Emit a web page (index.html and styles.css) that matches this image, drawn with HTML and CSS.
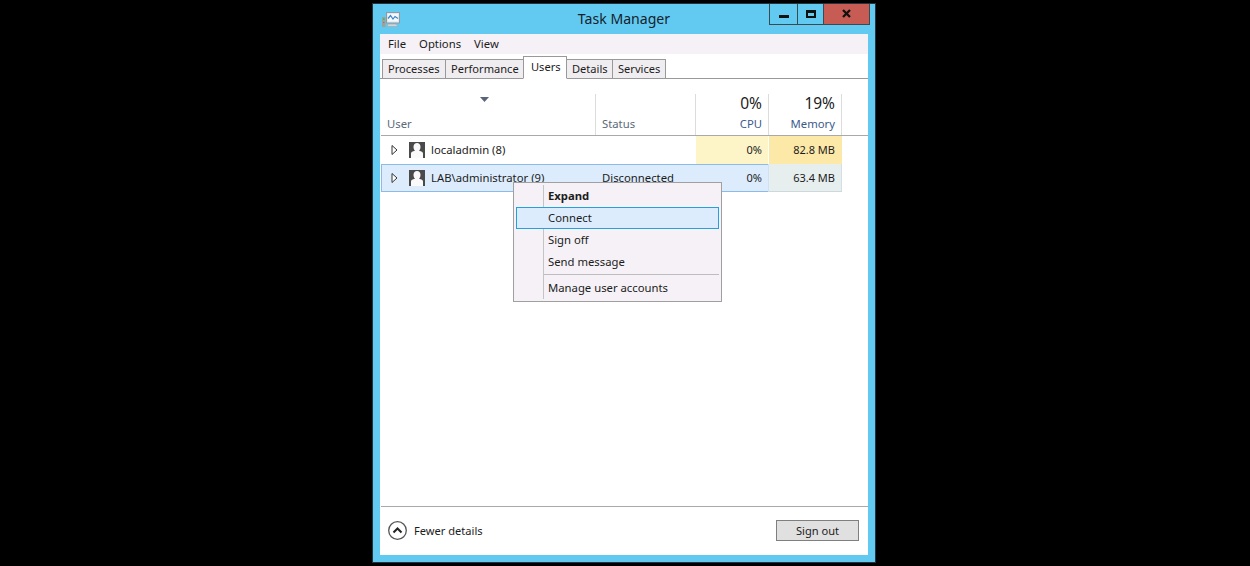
FILE: index.html
```html
<!DOCTYPE html>
<html lang="en">
<head>
<meta charset="utf-8">
<title>Task Manager</title>
<link rel="stylesheet" href="styles.css">
</head>
<body>
<div class="window">
  <div class="titlebar">
    <svg class="app-icon" width="18" height="15" viewBox="0 0 18 15"><path d="M6 12h8l2 2.500H5z" fill="#cfd6da" stroke="#9aa4ab" stroke-width="0.600"/><rect x="4.500" y="0.500" width="13" height="10.500" fill="#dfe8ee" stroke="#8f9ba3"/><rect x="6" y="2" width="10" height="7.500" fill="#f4f8fb"/><path d="M6 6.500l2.500-3 2.500 3.500 2-2.500 3 2" fill="none" stroke="#3a86c8" stroke-width="1.200"/><rect x="0" y="5" width="3.500" height="10" fill="#9aa39c"/><rect x="1" y="6" width="1.500" height="2" fill="#5fb060"/><rect x="1" y="10" width="1.500" height="1" fill="#c8605a"/></svg>
    <div class="title">Task Manager</div>
    <div class="controls">
      <div class="ctl ctl-min"><span class="min-glyph"></span></div>
      <div class="ctl ctl-max"><span class="max-glyph"></span></div>
      <div class="ctl ctl-close"><svg width="9" height="9" viewBox="0 0 9 9"><path d="M1 1l7 7M8 1l-7 7" stroke="#111" stroke-width="2.300" fill="none"/></svg></div>
    </div>
  </div>
  <div class="client">
    <div class="menubar"><span>File</span><span>Options</span><span>View</span></div>
    <div class="tabs">
      <div class="tab tab-processes">Processes</div>
      <div class="tab tab-performance">Performance</div>
      <div class="tab tab-active">Users</div>
      <div class="tab tab-details">Details</div>
      <div class="tab tab-services">Services</div>
    </div>
    <div class="table">
      <div class="thead">
        <div class="th th-user"><svg class="sort" width="9" height="5" viewBox="0 0 9 5"><path d="M0 0h9L4.500 5z" fill="#5a6478"/></svg><span class="th-label">User</span></div>
        <div class="th th-status"><span class="th-label">Status</span></div>
        <div class="th th-num th-cpu"><span class="pct">0%</span><span class="th-label th-blue">CPU</span></div>
        <div class="th th-num th-mem"><span class="pct">19%</span><span class="th-label th-blue">Memory</span></div>
      </div>
      <div class="row">
        <div class="cell c-user"><svg class="twisty" width="7" height="10" viewBox="0 0 7 10"><path d="M1 0.500L6 5 1 9.500z" fill="#fff" stroke="#333"/></svg><svg class="avatar" width="16" height="16" viewBox="0 0 16 16"><rect width="16" height="16" fill="#4a4a4a"/><path d="M2 16v-4.500C2 10 3.500 9.300 6 8.800 5 7.800 4.500 6.500 4.500 4.800 4.500 2.500 6 1 8 1s3.500 1.500 3.500 3.800c0 1.700-.5 3-1.500 4 2.500.5 4 1.200 4 2.700V16z" fill="#fafafa"/></svg><span>localadmin (8)</span></div>
        <div class="cell c-status"></div>
        <div class="cell c-num c-cpu heat-1">0%</div>
        <div class="cell c-num c-mem heat-2">82.8 MB</div>
      </div>
      <div class="row row-selected">
        <div class="cell c-user"><svg class="twisty" width="7" height="10" viewBox="0 0 7 10"><path d="M1 0.500L6 5 1 9.500z" fill="#fff" stroke="#333"/></svg><svg class="avatar" width="16" height="16" viewBox="0 0 16 16"><rect width="16" height="16" fill="#4a4a4a"/><path d="M2 16v-4.500C2 10 3.500 9.300 6 8.800 5 7.800 4.500 6.500 4.500 4.800 4.500 2.500 6 1 8 1s3.500 1.500 3.500 3.800c0 1.700-.5 3-1.500 4 2.500.5 4 1.200 4 2.700V16z" fill="#fafafa"/></svg><span>LAB\administrator (9)</span></div>
        <div class="cell c-status">Disconnected</div>
        <div class="cell c-num c-cpu">0%</div>
        <div class="cell c-num c-mem heat-3">63.4 MB</div>
      </div>
    </div>
    <div class="footer">
      <div class="fewer">
        <svg width="19" height="19" viewBox="0 0 19 19"><circle cx="9.500" cy="9.500" r="8.800" fill="#fff" stroke="#555" stroke-width="1.300"/><path d="M5.500 11.500l4-4 4 4" fill="none" stroke="#222" stroke-width="2"/></svg>
        <span>Fewer details</span>
      </div>
      <div class="signout">Sign out</div>
    </div>
  </div>
  <div class="context-menu">
    <div class="mi mi-bold">Expand</div>
    <div class="mi mi-hot">Connect</div>
    <div class="mi">Sign off</div>
    <div class="mi">Send message</div>
    <div class="mi-sep"></div>
    <div class="mi mi-last">Manage user accounts</div>
  </div>
</div>
</body>
</html>
```

FILE: styles.css
```css
* { box-sizing: border-box; }
html, body { margin: 0; height: 100%; }
body {
  background: #000;
  padding: 3px 0 0 372px;
  font-family: "Noto Sans", "Open Sans", sans-serif;
  font-size: 11.3px;
  color: #1c1c1c;
  overflow: hidden;
}
.window {
  position: relative;
  width: 504px;
  height: 560px;
  background: #62caf1;
  border: 1px solid #24343e;
  padding: 0 7px 7px;
  display: flex;
  flex-direction: column;
}
.titlebar {
  height: 30px;
  flex: none;
  display: flex;
  align-items: flex-start;
  position: relative;
}
.app-icon { margin: 8px 0 0 2px; }
.title {
  position: absolute;
  left: 0;
  right: 0;
  top: 5px;
  text-align: center;
  font-size: 14.1px;
  line-height: 20px;
  color: #14222c;
}
.controls {
  position: absolute;
  right: -2px;
  top: 0;
  display: flex;
  height: 21px;
}
.ctl {
  height: 21px;
  display: flex;
  align-items: center;
  justify-content: center;
  border: 1px solid #3a4a50;
  border-top: 0;
  margin-left: -1px;
}
.ctl-min { width: 29px; }
.ctl-max { width: 27px; }
.ctl-close { width: 47px; background: #c75c54; }
.min-glyph { width: 10px; height: 3px; background: #111; margin-top: 5px; }
.max-glyph { width: 10px; height: 8px; border: 2px solid #111; border-top-width: 3px; margin-top: -1px; }
.ctl-close svg { margin-top: -1px; }
.client {
  flex: 1;
  background: #fff;
  display: flex;
  flex-direction: column;
  min-height: 0;
}
.menubar {
  height: 20px;
  flex: none;
  background: #f5f1f6;
  display: flex;
  align-items: center;
  gap: 13px;
  padding-left: 8px;
  line-height: 20px;
}
.tabs {
  height: 25px;
  flex: none;
  display: flex;
  align-items: flex-end;
  border-bottom: 1px solid #999;
  padding-left: 2px;
  font-size: 11.1px;
}
.tab {
  height: 20px;
  margin-bottom: -1px;
  padding: 0 0 0 5px;
  border: 1px solid #999;
  margin-right: -1px;
  background: #f0edf0;
  line-height: 18px;
  position: relative;
  white-space: nowrap;
}
.tab-processes { width: 64px; }
.tab-performance { width: 79px; }
.tab-details { width: 47px; }
.tab-services { width: 54px; }
.tab-active {
  width: 44px;
  height: 23px;
  background: #fff;
  border-bottom-color: #fff;
  line-height: 20px;
  padding: 0 0 0 7px;
  z-index: 1;
}
.table { flex: 1; min-height: 0; }
.thead {
  height: 57px;
  display: flex;
  align-items: stretch;
  border-bottom: 1px solid #a9a9a9;
  padding-top: 15px;
  margin-left: 1px;
}
.th {
  position: relative;
  border-right: 1px solid #dcdcdc;
  display: flex;
  flex-direction: column;
  justify-content: flex-end;
  padding: 0 6px 3px;
  color: #5b6a78;
}
.th-user { width: 215px; }
.th-status { width: 100px; }
.th-num { width: 73px; align-items: flex-end; }
.sort { position: absolute; left: 99px; top: 3px; }
.pct { font-size: 15.5px; line-height: 20px; color: #1c1c1c; margin-bottom: 2px; }
.th-label { line-height: 17px; }
.th-blue { color: #3c5a8c; }
.row {
  height: 28px;
  display: flex;
  margin-left: 1px;
  width: 461px;
}
.cell {
  display: flex;
  align-items: center;
  height: 100%;
  line-height: 16px;
}
.c-user { width: 215px; padding-left: 10px; }
.c-status { width: 100px; padding-left: 6px; }
.c-num { width: 73px; justify-content: flex-end; padding-right: 6px; border-right: 1px solid #fff; font-size: 11px; }
.twisty { flex: none; margin-right: 11px; }
.avatar { flex: none; margin-right: 6px; }
.heat-1 { background: #fdf5c8; }
.heat-2 { background: #fce9a8; border-right-color: #fce9a8; }
.heat-3 { background: #e6eeee; }
.row-selected { background: #dcecfc; box-shadow: inset 0 1px 0 #8bbbe8, inset 1px 0 0 #8bbbe8, inset 0 -1px 0 #8bbbe8; }
.row-selected .c-cpu { border-right-color: #cfe2f5; }
.row-selected .c-mem { border-right-color: #d5dfe3; border-bottom: 1px solid #cdd8dc; }
.footer {
  height: 49px;
  flex: none;
  margin-left: 1px;
  border-top: 1px solid #a9a9a9;
  display: flex;
  justify-content: space-between;
  align-items: center;
  padding: 0 9px 1px 7px;
  font-size: 11.1px;
}
.fewer { display: flex; align-items: center; gap: 7px; }
.signout {
  width: 83px;
  height: 21px;
  background: #e0e0e0;
  border: 1px solid #7f7f7f;
  text-align: center;
  line-height: 20px;
}
.context-menu {
  position: absolute;
  left: 140px;
  top: 178px;
  width: 209px;
  height: 120px;
  background: #f5f1f6;
  border: 1px solid #a0a0a0;
  padding: 2px;
  z-index: 5;
}
.context-menu::before {
  content: "";
  position: absolute;
  left: 29px;
  top: 2px;
  bottom: 2px;
  width: 1px;
  background: #c4c4c4;
}
.mi {
  height: 22px;
  line-height: 21px;
  padding-left: 32px;
  position: relative;
}
.mi-bold { font-weight: 700; }
.mi-hot {
  background: #dcecfc;
  border: 1px solid #26a0da;
  padding-left: 31px;
  line-height: 19px;
}
.mi-sep { height: 1px; background: #bdbdbd; margin: 1px 0 1px 28px; }
.mi-last { height: 24px; line-height: 24px; }
```
